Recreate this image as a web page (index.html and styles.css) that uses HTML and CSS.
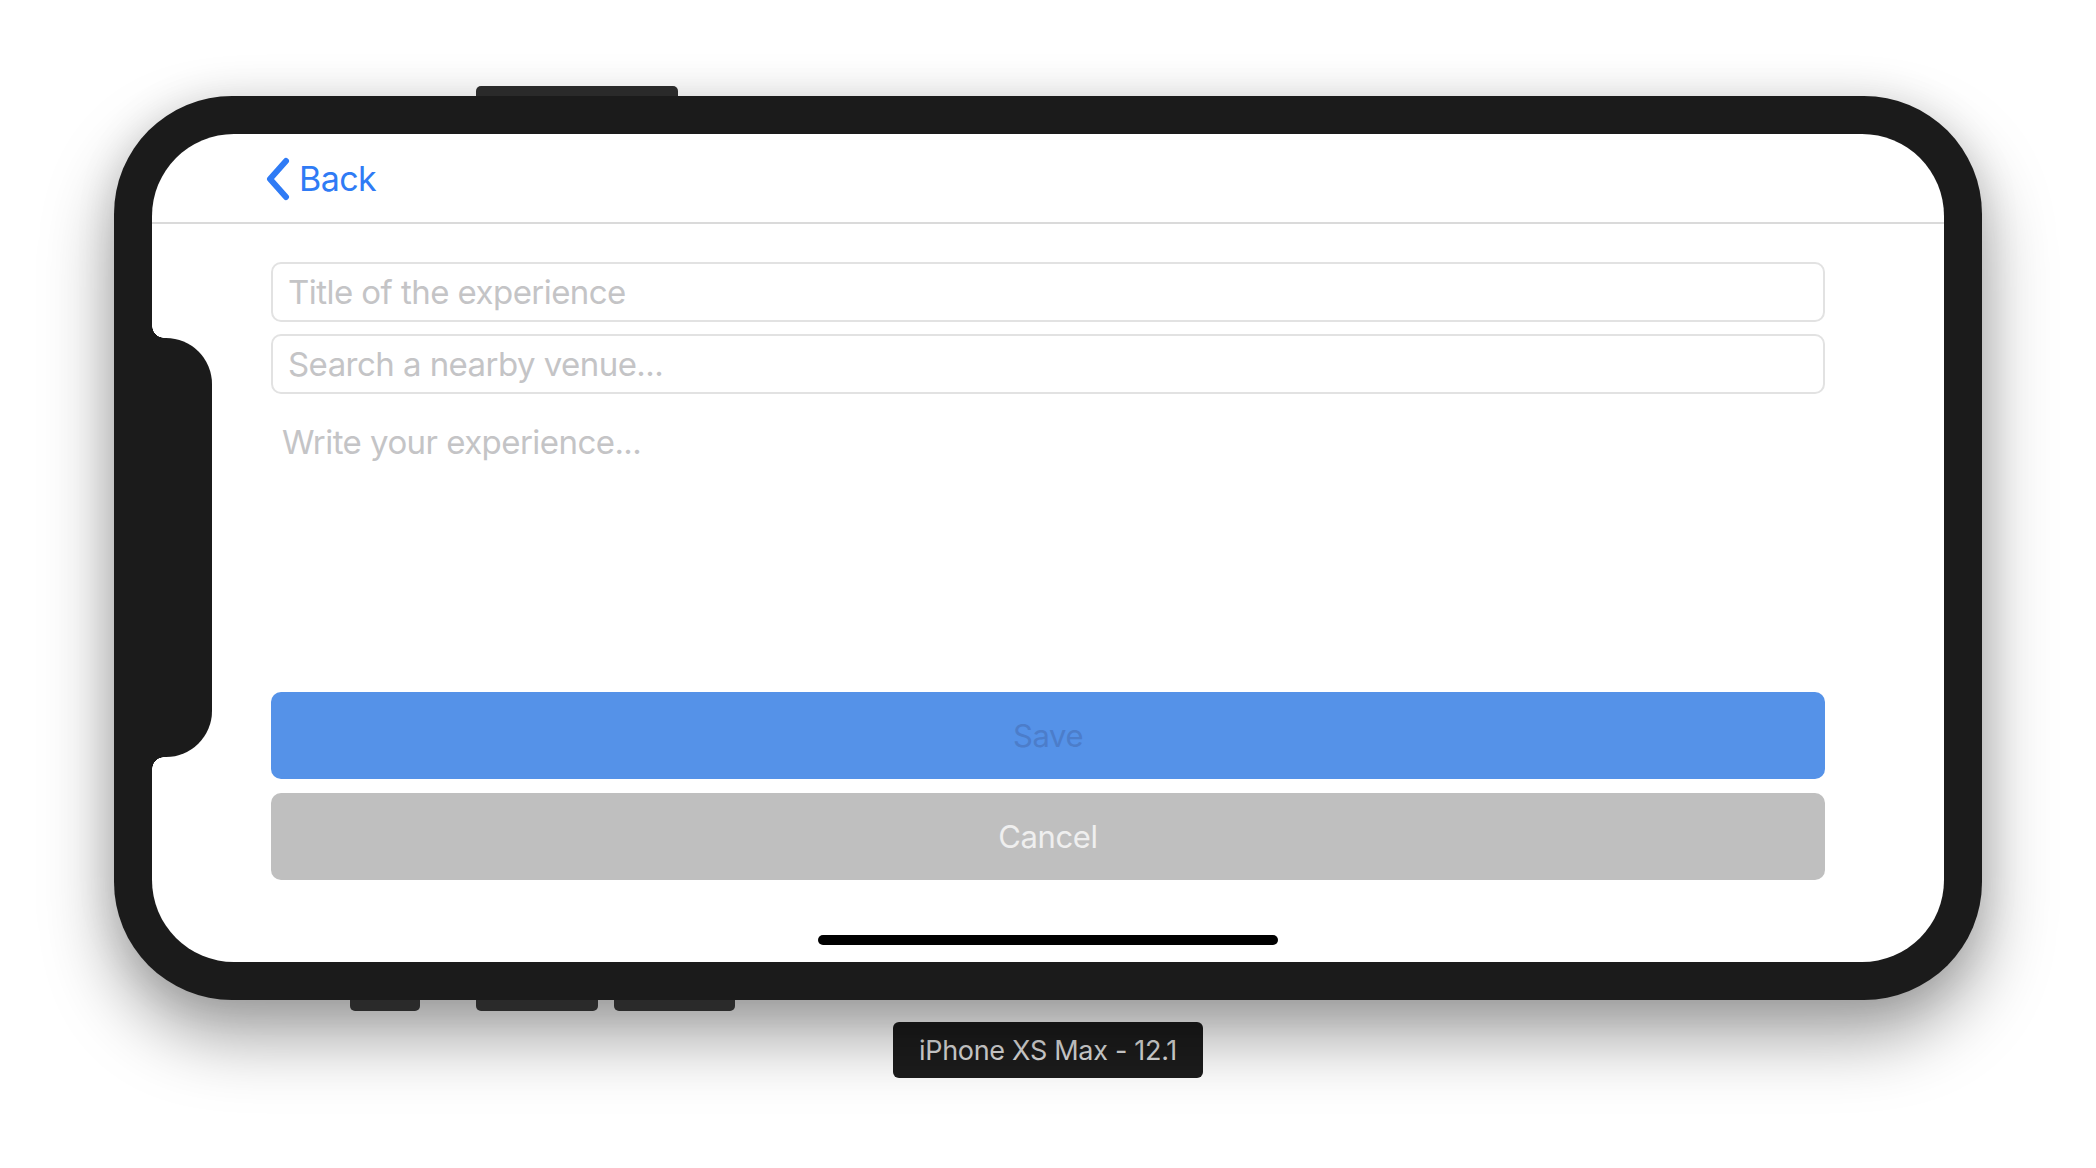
FILE: index.html
```html
<!DOCTYPE html>
<html lang="en">
<head>
<meta charset="utf-8">
<title>Simulator</title>
<link rel="stylesheet" href="styles.css">
</head>
<body>
<div class="stage">
  <div class="device-wrap">
    <div class="phone">
      <div class="hw hw-top"></div>
      <div class="hw hw-b1"></div>
      <div class="hw hw-b2"></div>
      <div class="hw hw-b3"></div>
      <div class="screen">
        <div class="notch"></div>
        <div class="nav">
          <svg class="chevron" width="26" height="44" viewBox="0 0 26 44"><polyline points="21,4 5,22 21,40" fill="none" stroke="#2f7bf5" stroke-width="6" stroke-linecap="round" stroke-linejoin="round"/></svg>
          <span class="back-label">Back</span>
        </div>
        <div class="form">
          <div class="field">Title of the experience</div>
          <div class="field">Search a nearby venue...</div>
          <div class="textview">Write your experience...</div>
          <div class="btn save">Save</div>
          <div class="btn cancel">Cancel</div>
        </div>
        <div class="home-indicator"></div>
      </div>
    </div>
    <div class="device-label">iPhone XS Max - 12.1</div>
  </div>
</div>
</body>
</html>
```

FILE: styles.css
```css
html, body {
  margin: 0;
  padding: 0;
  background: #ffffff;
}
body {
  width: 2096px;
  height: 1168px;
  overflow: hidden;
  font-family: Inter, "Liberation Sans", sans-serif;
}
.stage {
  box-sizing: border-box;
  width: 2096px;
  height: 1168px;
  padding: 96px 0 0 114px;
}
.device-wrap {
  width: 1868px;
  display: flex;
  flex-direction: column;
  align-items: center;
}
.phone {
  position: relative;
  box-sizing: border-box;
  width: 1868px;
  height: 904px;
  padding: 38px;
  background: #1b1b1b;
  border-radius: 118px;
  box-shadow: 0 36px 70px rgba(0, 0, 0, 0.38), 0 0 40px rgba(0, 0, 0, 0.10);
}
.hw {
  position: absolute;
  background: #2a2a2a;
}
.hw-top {
  left: 362px;
  top: -10px;
  width: 202px;
  height: 10px;
  border-radius: 5px 5px 0 0;
}
.hw-b1, .hw-b2, .hw-b3 {
  bottom: -11px;
  height: 11px;
  border-radius: 0 0 5px 5px;
}
.hw-b1 { left: 236px; width: 70px; }
.hw-b2 { left: 362px; width: 122px; }
.hw-b3 { left: 500px; width: 121px; }
.screen {
  position: relative;
  height: 100%;
  background: #ffffff;
  border-radius: 82px;
  overflow: hidden;
  display: flex;
  flex-direction: column;
}
.notch {
  position: absolute;
  left: 0;
  top: 204px;
  width: 60px;
  height: 419px;
  background: #1b1b1b;
  border-radius: 0 46px 46px 0;
}
.notch::before, .notch::after {
  content: "";
  position: absolute;
  left: 0;
  width: 12px;
  height: 12px;
}
.notch::before {
  top: -12px;
  background: radial-gradient(circle at 100% 0%, transparent 11.5px, #1b1b1b 12px);
}
.notch::after {
  bottom: -12px;
  background: radial-gradient(circle at 100% 100%, transparent 11.5px, #1b1b1b 12px);
}
.nav {
  flex: none;
  height: 88px;
  border-bottom: 2px solid #dadada;
  display: flex;
  align-items: center;
  padding-left: 113px;
}
.chevron {
  display: block;
  margin-top: 1px;
}
.back-label {
  margin-left: 8px;
  font-size: 34px;
  color: #2f7bf5;
  letter-spacing: -0.6px;
}
.form {
  flex: none;
  padding: 38px 119px 0 119px;
  display: flex;
  flex-direction: column;
}
.field {
  box-sizing: border-box;
  height: 60px;
  border: 2px solid #e2e2e2;
  border-radius: 10px;
  padding-left: 15px;
  display: flex;
  align-items: center;
  font-size: 33px;
  color: #c4c4c6;
  letter-spacing: -0.55px;
}
.field + .field {
  margin-top: 12px;
}
.textview {
  box-sizing: border-box;
  height: 298px;
  padding: 28px 12px 0 11px;
  font-size: 33px;
  line-height: 41px;
  color: #c4c4c6;
  letter-spacing: -0.55px;
}
.btn {
  height: 87px;
  border-radius: 10px;
  display: flex;
  align-items: center;
  justify-content: center;
  font-size: 31px;
  letter-spacing: -0.4px;
}
.save {
  background: #5592e8;
  color: #4c7dca;
}
.cancel {
  margin-top: 14px;
  background: #bfbfbf;
  color: #efefef;
}
.home-indicator {
  margin-top: auto;
  margin-bottom: 17px;
  align-self: center;
  width: 460px;
  height: 10px;
  border-radius: 5px;
  background: #000000;
}
.device-label {
  margin-top: 22px;
  box-sizing: border-box;
  height: 56px;
  padding: 0 26px;
  background: #1c1c1c;
  border-radius: 6px;
  display: flex;
  align-items: center;
  font-size: 27px;
  color: #dcdcdc;
  letter-spacing: -0.3px;
}
```
